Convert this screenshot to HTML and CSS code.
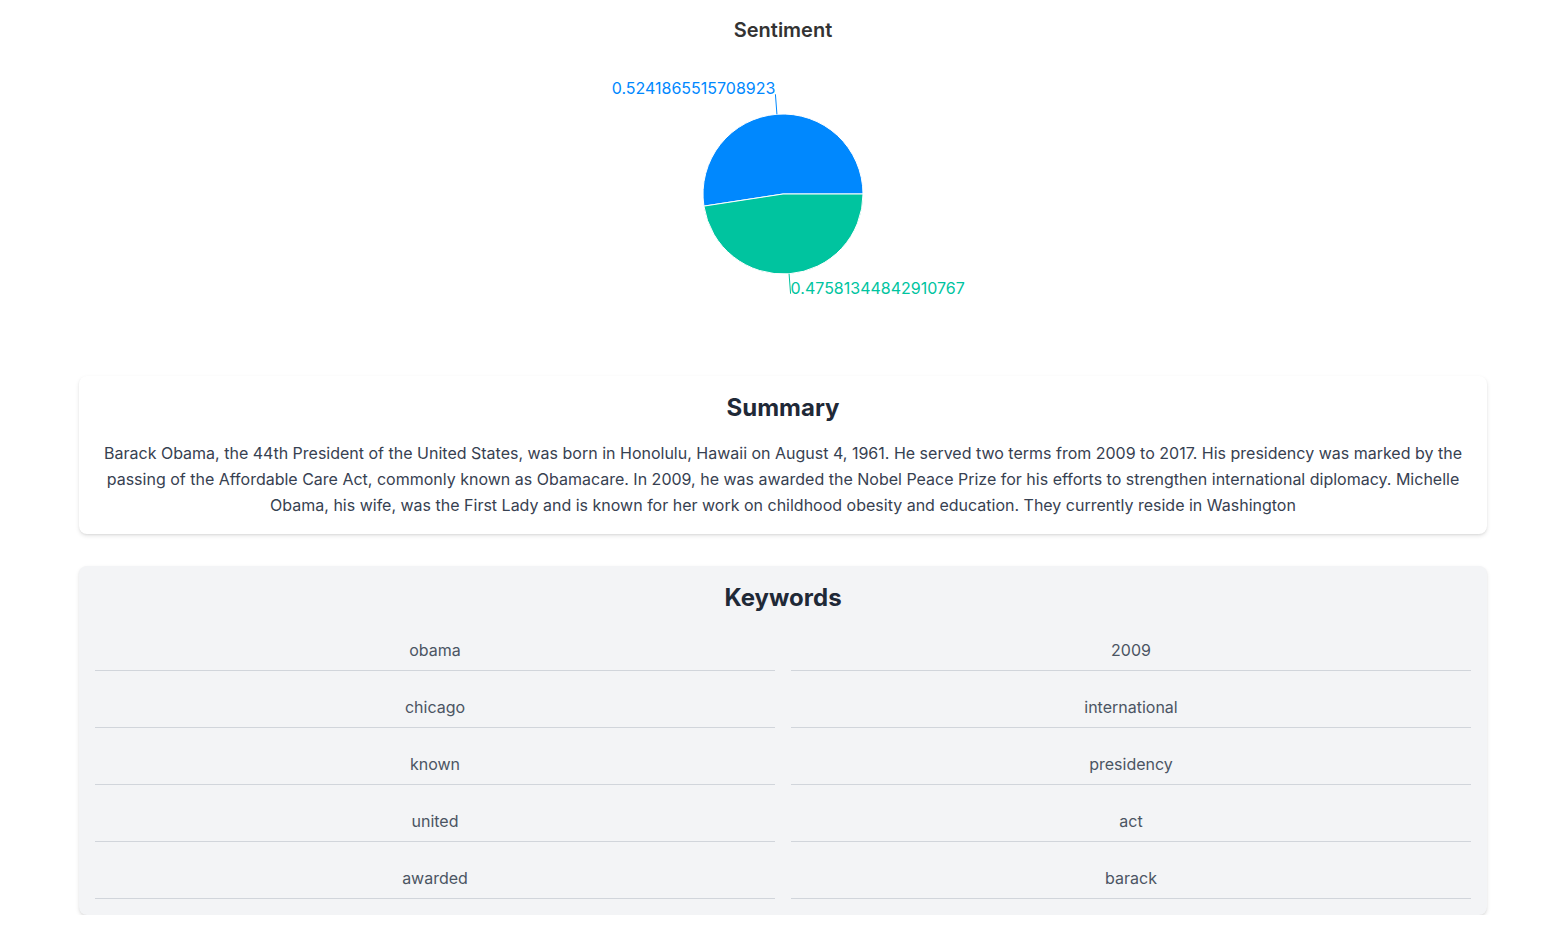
FILE: index.html
```html
<!DOCTYPE html>
<html lang="en">
<head>
<meta charset="utf-8">
<title>Analysis</title>
<link rel="stylesheet" href="styles.css">
</head>
<body>
<main class="page">
  <section class="sentiment">
    <h2 class="sentiment-title">Sentiment</h2>
    <svg class="pie" width="400" height="300" viewBox="0 0 400 300">
      <path d="M200,150 L280,150 A80,80 0 1,0 120.92,162.11 Z" fill="#0088FE" stroke="#fff" stroke-width="1"/>
      <path d="M200,150 L120.92,162.11 A80,80 0 0,0 280,150 Z" fill="#00C49F" stroke="#fff" stroke-width="1"/>
      <line x1="193.93" y1="70.23" x2="192.41" y2="50.29" stroke="#0088FE" stroke-width="1"/>
      <line x1="206.07" y1="229.77" x2="207.59" y2="249.71" stroke="#00C49F" stroke-width="1"/>
      <text x="192.4" y="50.3" text-anchor="end" fill="#0088FE" class="pie-label">0.5241865515708923</text>
      <text x="207.6" y="249.7" text-anchor="start" fill="#00C49F" class="pie-label">0.47581344842910767</text>
    </svg>
  </section>

  <section class="card summary">
    <h2 class="card-title">Summary</h2>
    <p class="summary-text">Barack Obama, the 44th President of the United States, was born in Honolulu, Hawaii on August 4, 1961. He served two terms from 2009 to 2017. His presidency was marked by the passing of the Affordable Care Act, commonly known as Obamacare. In 2009, he was awarded the Nobel Peace Prize for his efforts to strengthen international diplomacy. Michelle Obama, his wife, was the First Lady and is known for her work on childhood obesity and education. They currently reside in Washington</p>
  </section>

  <section class="card keywords">
    <h2 class="card-title">Keywords</h2>
    <ul class="keyword-grid">
      <li class="keyword">obama</li>
      <li class="keyword">2009</li>
      <li class="keyword">chicago</li>
      <li class="keyword">international</li>
      <li class="keyword">known</li>
      <li class="keyword">presidency</li>
      <li class="keyword">united</li>
      <li class="keyword">act</li>
      <li class="keyword">awarded</li>
      <li class="keyword">barack</li>
    </ul>
  </section>
</main>
</body>
</html>
```

FILE: styles.css
```css
* { box-sizing: border-box; }

html, body {
  margin: 0;
  padding: 0;
  background: #ffffff;
  font-family: Inter, "Noto Sans", "Liberation Sans", sans-serif;
  color: #374151;
}

.page {
  width: 1408px;
  margin-left: 79px;
  display: flex;
  flex-direction: column;
}

.sentiment {
  display: flex;
  flex-direction: column;
  align-items: center;
  padding-top: 16px;
  margin-bottom: 32px;
}

.sentiment-title {
  margin: 0;
  font-size: 20px;
  line-height: 28px;
  font-weight: 600;
  color: #333333;
}

.pie { display: block; }

.pie-label {
  font-family: Inter, "Noto Sans", sans-serif;
  font-size: 16px;
}

.card {
  border-radius: 8px;
  box-shadow: 0 2px 4px rgba(0,0,0,0.1), 0 1px 2px rgba(0,0,0,0.06);
  padding: 16px 24px;
}

.summary {
  background: #ffffff;
  margin-bottom: 32px;
}

.keywords {
  background: #f3f4f6;
  padding: 16px 16px;
}

.card-title {
  margin: 0 0 16px;
  text-align: center;
  font-size: 24px;
  line-height: 32px;
  font-weight: 700;
  color: #1f2937;
}

.summary-text {
  margin: 0;
  text-align: center;
  font-size: 16px;
  line-height: 26px;
  color: #374151;
}

.keyword-grid {
  list-style: none;
  margin: 0;
  padding: 0;
  display: grid;
  grid-template-columns: 1fr 1fr;
  column-gap: 16px;
  row-gap: 16px;
}

.keyword {
  text-align: center;
  font-size: 16px;
  line-height: 24px;
  padding: 8px 0;
  border-bottom: 1px solid #d1d5db;
  color: #4b5563;
}
```
